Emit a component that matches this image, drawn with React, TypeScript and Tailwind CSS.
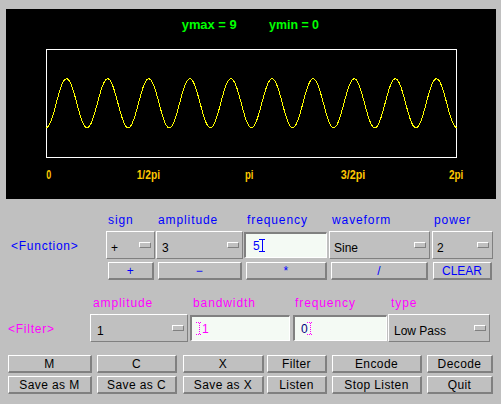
import React from "react";

// Java-applet style synthesizer panel: plot canvas + function / filter controls.

const FONT = { fontFamily: '"Liberation Sans", Arial, sans-serif' };

function wavePath() {
  const pts: string[] = [];
  for (let x = 0; x <= 411; x++) {
    const y = 94.25 + 24.5 * Math.cos((2 * Math.PI * 10 * x) / 411);
    pts.push(`${(40 + x).toFixed(1)},${y.toFixed(1)}`);
  }
  return "M" + pts.join("L");
}

function Plot() {
  const axis = [
    { t: "0", x: 40.3, w: 5 },
    { t: "1/2pi", x: 130.7, w: 23.3 },
    { t: "pi", x: 239, w: 8.5 },
    { t: "3/2pi", x: 334.7, w: 24.6 },
    { t: "2pi", x: 443, w: 14.3 },
  ];
  return (
    <div className="ml-[6px] mt-[9px] h-[190px] w-[490px] bg-black">
      <svg width="490" height="190" viewBox="0 0 490 190" className="block">
        <g fontFamily='"Liberation Sans", Arial, sans-serif' fontWeight="bold" fontSize="12.5">
          <text x="175.7" y="20.3" fill="#00ff00" textLength="55" lengthAdjust="spacingAndGlyphs">
            ymax = 9
          </text>
          <text x="263" y="20.3" fill="#00ff00" textLength="50" lengthAdjust="spacingAndGlyphs">
            ymin = 0
          </text>
          {axis.map((a) => (
            <text
              key={a.t}
              x={a.x}
              y="170.3"
              fill="#ffc800"
              textLength={a.w}
              lengthAdjust="spacingAndGlyphs"
            >
              {a.t}
            </text>
          ))}
        </g>
        <rect x="40.5" y="40.5" width="410" height="108" fill="none" stroke="#ffffff" shapeRendering="crispEdges" />
        <path d={wavePath()} fill="none" stroke="#ffff00" strokeWidth="1" shapeRendering="crispEdges" />
      </svg>
    </div>
  );
}

function Choice({ value, className = "" }: { value: string; className?: string }) {
  return (
    <div
      className={`flex h-[28px] items-center border border-t-white border-l-white border-b-[#808080] border-r-[#808080] ${className}`}
    >
      <span className="pt-[5px] text-[12px] leading-[14px] text-black">{value}</span>
      <span className="ml-auto mr-[3px] h-[6px] w-[12px] border border-t-white border-l-white border-b-[#808080] border-r-[#808080]" />
    </div>
  );
}

function Caret({ color, dotted }: { color: string; dotted?: boolean }) {
  return (
    <svg width="6" height="13" viewBox="0 0 6 13" className="block shrink-0">
      <path
        d="M0 0.5H6M3 0.5V12.5M0 12.5H6"
        stroke={color}
        strokeDasharray={dotted ? "1 1" : undefined}
        fill="none"
        shapeRendering="crispEdges"
      />
    </svg>
  );
}

function Field({ children, className = "" }: { children: React.ReactNode; className?: string }) {
  return (
    <div
      className={`flex h-[26px] items-center border-t-2 border-l-2 border-t-[#808080] border-l-[#808080] border-b border-r border-b-white border-r-white bg-[#f4faf4] ${className}`}
    >
      {children}
    </div>
  );
}

function Btn({
  children,
  className = "",
  color = "text-black",
}: {
  children: React.ReactNode;
  className?: string;
  color?: string;
}) {
  return (
    <div
      className={`flex h-[18px] items-center justify-center border-t border-l border-t-white border-l-white border-b-2 border-r-2 border-b-[#808080] border-r-[#808080] text-[12px] leading-[14px] tracking-[0.4px] ${color} ${className}`}
    >
      {children}
    </div>
  );
}

function Label({ children, className = "" }: { children: React.ReactNode; className?: string }) {
  return <div className={`h-[18px] text-[12px] leading-[14px] tracking-[0.9px] ${className}`}>{children}</div>;
}

function FunctionRow() {
  return (
    <div className="mt-[14px] flex text-[#0000ff]">
      <div className="w-[106px]">
        <div className="mt-[18px] flex h-[28px] items-center pl-[11px] pt-[2px] text-[12px] leading-[14px] tracking-[0.75px]">
          &lt;Function&gt;
        </div>
      </div>

      <div className="w-[49px]">
        <Label className="pl-[2px]">sign</Label>
        <Choice value="+" className="pl-[4px]" />
        <Btn color="text-[#0000ff]" className="ml-[2px] mt-[3px] w-[46px]">+</Btn>
      </div>

      <div className="ml-[1px] w-[87px]">
        <Label className="pl-[2px]">amplitude</Label>
        <Choice value="3" className="pl-[5px]" />
        <Btn color="text-[#0000ff]" className="ml-[2px] mt-[3px] w-[84px]">−</Btn>
      </div>

      <div className="ml-[1px] w-[83px]">
        <Label className="pl-[3px]">frequency</Label>
        <div className="flex h-[28px] items-center">
          <Field className="w-full pl-[7px]">
            <span className="text-[12px] leading-[14px] text-[#0000ff]">5</span>
            <span className="-ml-[1px]">
              <Caret color="#0000ff" />
            </span>
          </Field>
        </div>
        <Btn color="text-[#0000ff]" className="ml-[2px] mt-[3px] w-[81px]">*</Btn>
      </div>

      <div className="ml-[2px] w-[101px]">
        <Label className="pl-[3px]">waveform</Label>
        <Choice value="Sine" className="pl-[4px]" />
        <Btn color="text-[#0000ff]" className="ml-[2px] mt-[3px] w-[97px]">/</Btn>
      </div>

      <div className="ml-[2px] w-[61px]">
        <Label className="pl-[2px]">power</Label>
        <Choice value="2" className="pl-[4px]" />
        <Btn color="text-[#0000ff]" className="ml-[1px] mt-[3px] w-[59px] tracking-[0px]">CLEAR</Btn>
      </div>
    </div>
  );
}

function FilterRow() {
  return (
    <div className="mt-[16px] flex text-[#ff00ff]">
      <div className="w-[90px]">
        <div className="mt-[18px] flex h-[28px] items-center pl-[8px] pt-[2px] text-[12px] leading-[14px] tracking-[0.75px]">
          &lt;Filter&gt;
        </div>
      </div>

      <div className="w-[98px]">
        <Label className="pl-[3px]">amplitude</Label>
        <Choice value="1" className="pl-[6px]" />
      </div>

      <div className="ml-[2px] w-[100px]">
        <Label className="pl-[3px]">bandwidth</Label>
        <div className="flex h-[28px] items-center">
          <Field className="w-full pl-[4px]">
            <Caret color="#ff00ff" dotted />
            <span className="text-[12px] leading-[14px] text-[#ff00ff]">1</span>
          </Field>
        </div>
      </div>

      <div className="ml-[3px] w-[94px]">
        <Label className="pl-[2px]">frequency</Label>
        <div className="flex h-[28px] items-center">
          <Field className="w-full pl-[6px]">
            <span className="text-[12px] leading-[14px] text-[#000080]">0</span>
            <span className="-ml-[1px]">
              <Caret color="#ff00ff" dotted />
            </span>
          </Field>
        </div>
      </div>

      <div className="ml-[1px] w-[102px]">
        <Label className="pl-[3px]">type</Label>
        <Choice value="Low Pass" className="pl-[5px]" />
      </div>
    </div>
  );
}

const BUTTON_COLS = [
  { ml: "ml-[8px]", w: "w-[84px]" },
  { ml: "ml-[5px]", w: "w-[80px]" },
  { ml: "ml-[6px]", w: "w-[81px]" },
  { ml: "ml-[3px]", w: "w-[60px]" },
  { ml: "ml-[5px]", w: "w-[90px]" },
  { ml: "ml-[5px]", w: "w-[66px]" },
];

const ROW1 = ["M", "C", "X", "Filter", "Encode", "Decode"];
const ROW2 = ["Save as M", "Save as C", "Save as X", "Listen", "Stop Listen", "Quit"];

function ButtonRow({ labels, className = "" }: { labels: string[]; className?: string }) {
  return (
    <div className={`flex ${className}`}>
      {labels.map((l, i) => (
        <Btn key={l} className={`${BUTTON_COLS[i].ml} ${BUTTON_COLS[i].w}`}>
          {l}
        </Btn>
      ))}
    </div>
  );
}

export default function App() {
  return (
    <div className="h-[404px] w-[501px] overflow-hidden bg-[#c0c0c0]" style={FONT}>
      <Plot />
      <FunctionRow />
      <FilterRow />
      <ButtonRow labels={ROW1} className="mt-[13px]" />
      <ButtonRow labels={ROW2} className="mt-[3px]" />
    </div>
  );
}
